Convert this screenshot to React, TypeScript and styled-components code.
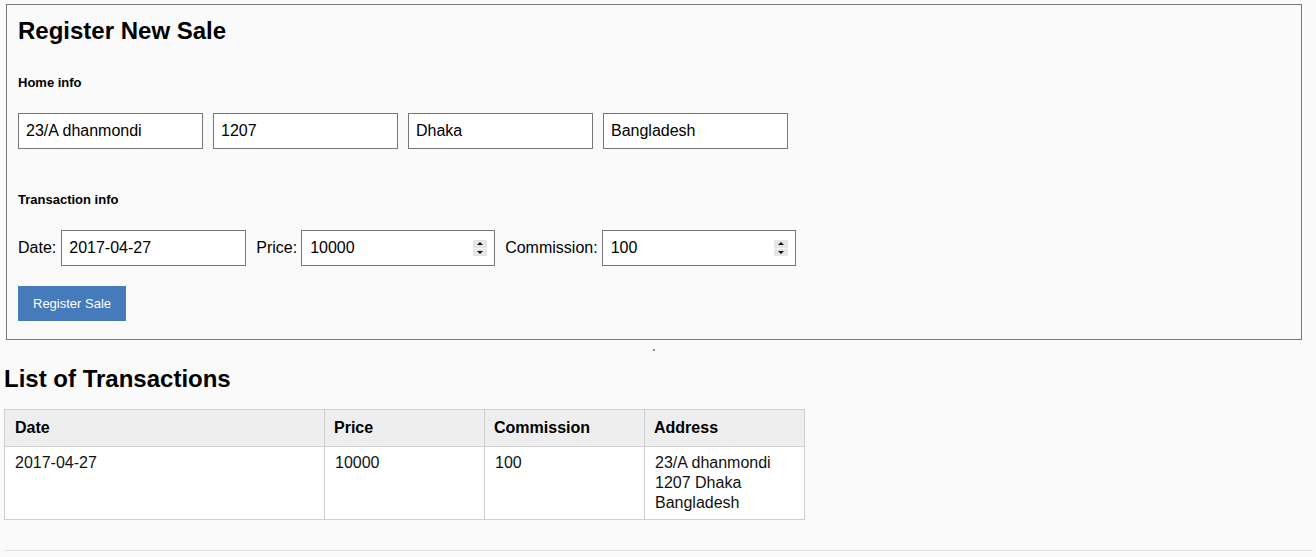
import React, { useState } from "react";
import styled, { createGlobalStyle } from "styled-components";

const GlobalStyle = createGlobalStyle`
  html, body {
    margin: 0;
    padding: 0;
    background: #fafafa;
    color: #000;
    font-family: "Liberation Sans", Arial, sans-serif;
  }
`;

const Page = styled.div`
  padding: 4px 4px 0;
`;

const FormBox = styled.form`
  margin: 0 10px 0 2px;
  padding: 11px 11px 18px;
  border: 1px solid #7a7a7a;
  background: #fafafa;
`;

const Title = styled.h2<{ $top?: number }>`
  margin: ${({ $top }) => $top ?? 1}px 0 0;
  font-size: 24px;
  line-height: 28px;
  font-weight: 700;
`;

const SectionLabel = styled.h4<{ $top: number }>`
  margin: ${({ $top }) => $top}px 0 0;
  font-size: 13px;
  line-height: 16px;
  font-weight: 700;
`;

const FieldRow = styled.div<{ $top: number }>`
  display: flex;
  align-items: center;
  gap: 10px;
  margin-top: ${({ $top }) => $top}px;
`;

const Field = styled.label<{ $gap?: number }>`
  display: flex;
  align-items: center;
  gap: ${({ $gap }) => $gap ?? 4}px;
  font-size: 16px;
`;

const TextInput = styled.input`
  box-sizing: border-box;
  width: 185px;
  height: 36px;
  padding: 0 7px;
  border: 1px solid #777;
  border-radius: 0;
  background: #fff;
  font-family: "Liberation Sans", Arial, sans-serif;
  font-size: 16px;
  color: #000;
  outline: none;
`;

const NumberBox = styled.div`
  box-sizing: border-box;
  display: flex;
  align-items: center;
  width: 194px;
  height: 36px;
  padding: 0 7px 0 8px;
  border: 1px solid #777;
  background: #fff;
`;

const BareInput = styled.input`
  flex: 1;
  min-width: 0;
  padding: 0;
  border: none;
  background: transparent;
  font-family: "Liberation Sans", Arial, sans-serif;
  font-size: 16px;
  color: #000;
  outline: none;
`;

const Spinner = styled.div`
  display: flex;
  flex-direction: column;
  width: 14px;
  height: 16px;
  background: #e6e6e6;
`;

const SpinHalf = styled.button<{ $down?: boolean }>`
  flex: 1;
  display: flex;
  align-items: center;
  justify-content: center;
  padding: 0;
  border: none;
  border-top: ${({ $down }) => ($down ? "1px solid #f6f6f6" : "none")};
  background: transparent;
  cursor: pointer;

  &::after {
    content: "";
    border-left: 3px solid transparent;
    border-right: 3px solid transparent;
    ${({ $down }) =>
      $down ? "border-top: 3px solid #111;" : "border-bottom: 3px solid #111;"}
  }
`;

const SubmitButton = styled.button`
  display: block;
  margin-top: 20px;
  height: 35px;
  padding: 0 15px 1px;
  border: none;
  background: #457abb;
  color: #fff;
  font-family: "Liberation Sans", Arial, sans-serif;
  font-size: 13px;
  cursor: pointer;
`;

// tiny centered speck between the form and the list
const Dot = styled.div`
  width: 2px;
  height: 2px;
  margin: 9px 0 0 calc(50% - 5px);
  background: #8a8a8a;
`;

const Table = styled.table`
  margin-top: 16px;
  width: 801px;
  table-layout: fixed;
  border-collapse: collapse;
  font-size: 16px;
  line-height: 20px;
`;

const WideCol = styled.col`
  width: 320px;
`;

const NarrowCol = styled.col`
  width: 160px;
`;

const HeadCell = styled.th`
  padding: 8px 10px 8px 9px;
  border: 1px solid #cfcfcf;
  background: #eee;
  text-align: left;
  font-weight: 700;
  color: #000;

  &:first-child {
    padding-left: 10px;
  }
`;

const Cell = styled.td`
  padding: 6px 10px;
  border: 1px solid #cfcfcf;
  background: #fff;
  vertical-align: top;
  color: #111;
`;

const Footer = styled.div`
  margin-top: 30px;
  height: 20px;
  border-top: 1px solid #e2e2e2;
`;

type Sale = {
  date: string;
  price: string;
  commission: string;
  street: string;
  zip: string;
  city: string;
  country: string;
};

const NumberField: React.FC<{
  value: string;
  onChange: (v: string) => void;
}> = ({ value, onChange }) => {
  const step = (d: number) => onChange(String((Number(value) || 0) + d));
  return (
    <NumberBox>
      <BareInput value={value} onChange={(e) => onChange(e.target.value)} />
      <Spinner>
        <SpinHalf type="button" aria-label="increase" onClick={() => step(1)} />
        <SpinHalf type="button" $down aria-label="decrease" onClick={() => step(-1)} />
      </Spinner>
    </NumberBox>
  );
};

export default function App() {
  const [form, setForm] = useState<Sale>({
    street: "23/A dhanmondi",
    zip: "1207",
    city: "Dhaka",
    country: "Bangladesh",
    date: "2017-04-27",
    price: "10000",
    commission: "100",
  });
  const [sales, setSales] = useState<Sale[]>([{ ...form }]);

  const set = (key: keyof Sale) => (v: string) =>
    setForm((prev) => ({ ...prev, [key]: v }));

  const submit = (e: React.FormEvent) => {
    e.preventDefault();
    setSales((prev) => [...prev, { ...form }]);
  };

  return (
    <Page>
      <GlobalStyle />
      <FormBox onSubmit={submit}>
        <Title>Register New Sale</Title>
        <SectionLabel $top={30}>Home info</SectionLabel>
        <FieldRow $top={22}>
          <TextInput value={form.street} onChange={(e) => set("street")(e.target.value)} />
          <TextInput value={form.zip} onChange={(e) => set("zip")(e.target.value)} />
          <TextInput value={form.city} onChange={(e) => set("city")(e.target.value)} />
          <TextInput value={form.country} onChange={(e) => set("country")(e.target.value)} />
        </FieldRow>
        <SectionLabel $top={43}>Transaction info</SectionLabel>
        <FieldRow $top={22}>
          <Field $gap={5}>
            Date:
            <TextInput value={form.date} onChange={(e) => set("date")(e.target.value)} />
          </Field>
          <Field>
            Price:
            <NumberField value={form.price} onChange={set("price")} />
          </Field>
          <Field>
            Commission:
            <NumberField value={form.commission} onChange={set("commission")} />
          </Field>
        </FieldRow>
        <SubmitButton type="submit">Register Sale</SubmitButton>
      </FormBox>
      <Dot />
      <Title $top={14}>List of Transactions</Title>
      <Table>
        <colgroup>
          <WideCol />
          <NarrowCol />
          <NarrowCol />
          <NarrowCol />
        </colgroup>
        <thead>
          <tr>
            <HeadCell>Date</HeadCell>
            <HeadCell>Price</HeadCell>
            <HeadCell>Commission</HeadCell>
            <HeadCell>Address</HeadCell>
          </tr>
        </thead>
        <tbody>
          {sales.map((s, i) => (
            <tr key={i}>
              <Cell>{s.date}</Cell>
              <Cell>{s.price}</Cell>
              <Cell>{s.commission}</Cell>
              <Cell>
                <div>{s.street}</div>
                <div>
                  {s.zip} {s.city}
                </div>
                <div>{s.country}</div>
              </Cell>
            </tr>
          ))}
        </tbody>
      </Table>
      <Footer />
    </Page>
  );
}
